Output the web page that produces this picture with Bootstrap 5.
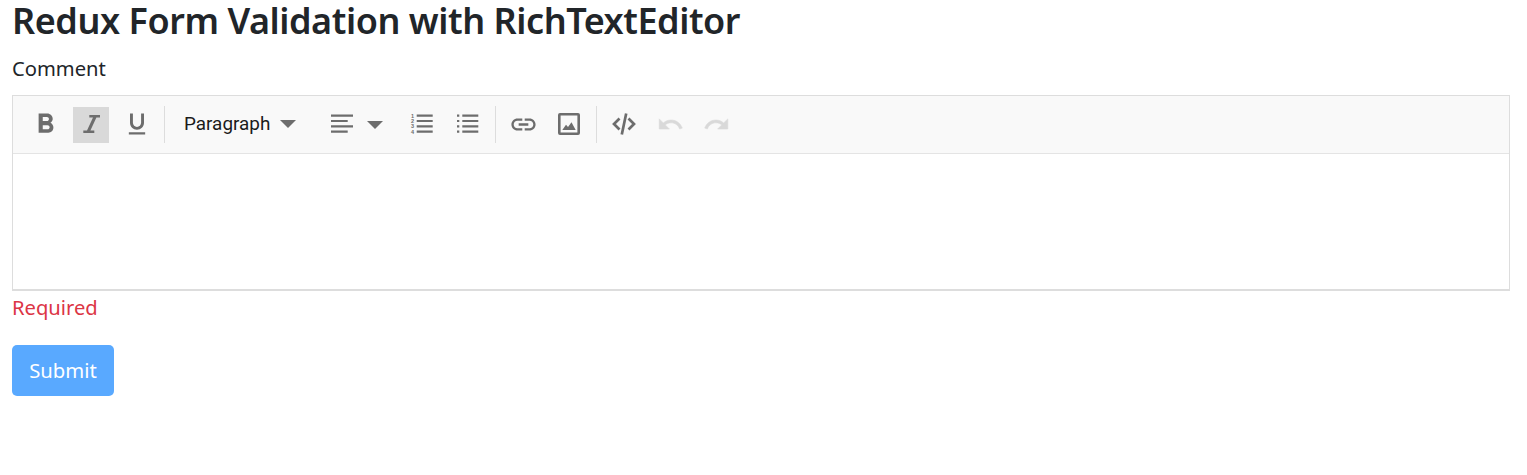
<!DOCTYPE html>
<html lang="en"><head><meta charset="utf-8"><title>Redux Form Validation</title>
<link href="https://cdn.jsdelivr.net/npm/bootstrap@5.3.0/dist/css/bootstrap.min.css" rel="stylesheet">
<style>
body{font-family:"Noto Sans","Open Sans",sans-serif;color:#212529;background:#fff;overflow:hidden}
.pagewrap{padding:0 17px 0 12px}
.ttl{font-size:36px;font-weight:600;line-height:42px;margin:0 0 13px;letter-spacing:-.45px}
.lbl{font-size:20.200px;line-height:27px;margin-bottom:13px;display:block}
.rte{border:1px solid #ddd;border-bottom-width:2px}
.rtebar{height:58px;background:#f9f9f9;border-bottom:1px solid #e4e4e4;padding:11px 0 0 14px}
.tb{width:36px;height:36px;border:0;background:none;padding:0 0 2px;margin-right:10px;display:flex;align-items:center;justify-content:center;color:#6d6d6d;flex:none}
.tb svg{width:24px;height:24px;fill:currentColor;display:block;flex:none}
.tb.on{background:#d9d9d9}
.tb.off{color:#d9d9d9}
.tb.off path{stroke:currentColor;stroke-width:.5}
.tb.ic33 svg{width:33px;height:33px}
.tb.ic28 svg{width:28px;height:28px}
.tb.ic29 svg{width:29px;height:29px}
.tb.ic27 svg{width:27px;height:27px}
.tb.endgrp{margin-right:9px}
.tb.startgrp{margin-left:9px}
.tb.listone{margin-left:21px}
.tb.alignbtn{margin-right:0}
.codeline{fill:none;stroke:currentColor;stroke-width:2.700}
.sep{width:1px;height:37px;background:#ddd;flex:none;margin-top:-1px}
.para{font-family:Roboto,sans-serif;font-size:18.900px;color:#1b1b1b;width:140px;height:36px;padding-bottom:2px;margin-left:19px;flex:none}
.caret{width:0;height:0;border:8px solid transparent;border-top:8px solid #6d6d6d;border-bottom:0;display:inline-block;margin-left:10px;flex:none}
.caret.aligncaret{margin:14px 0 0 7px}
.numtxt{font-size:5.500px;font-weight:700;font-family:"Liberation Sans",sans-serif}
.rtebody{height:135px;background:#fff}
.err{font-size:20.200px;color:#dc3545;line-height:27px;margin:3px 0 24px}
.sendbtn{background:#59a9ff;border:0;color:#fff;font-size:20.300px;height:51px;width:102px;border-radius:5px;padding:0;opacity:1}
</style></head><body>
<div class="pagewrap">
<h1 class="ttl">Redux Form Validation with RichTextEditor</h1>
<form>
<label class="lbl">Comment</label>
<div class="rte">
<div class="rtebar d-flex align-items-start">
<button type="button" class="tb ic33"><svg viewBox="0 0 24 24"><path d="M15.600 10.790c.97-.67 1.650-1.770 1.650-2.790 0-2.260-1.750-4-4-4H7v14h7.040c2.090 0 3.710-1.700 3.710-3.790 0-1.520-.86-2.820-2.150-3.420zM10 6.500h3c.83 0 1.500.67 1.500 1.500s-.67 1.500-1.500 1.500h-3v-3zm3.500 9H10v-3h3.500c.83 0 1.500.67 1.500 1.500s-.67 1.500-1.500 1.500z"/></svg></button>
<button type="button" class="tb on"><svg viewBox="0 0 24 24"><path d="M10.300 3H21v2.600h-3.600l-6 12.800H15.300V21H4.300v-2.600h3.700l6-12.800h-3.700z"/></svg></button>
<button type="button" class="tb endgrp ic28"><svg viewBox="0 0 24 24"><path d="M12 17c3.310 0 6-2.690 6-6V3h-2.500v8c0 1.930-1.570 3.500-3.500 3.500S8.500 12.930 8.500 11V3H6v8c0 3.310 2.690 6 6 6zm-7 2v2h14v-2H5z"/></svg></button>
<span class="sep"></span>
<div class="para d-flex align-items-center">Paragraph<span class="caret"></span></div>
<button type="button" class="tb alignbtn"><svg viewBox="0 0 24 24"><path d="M1 2.600h22v2.200H1zM1 7.900h16.700v2.200H1zM1 13.200h22v2.200H1zM1 18.600h16.700v2.200H1z"/></svg></button>
<span class="caret aligncaret"></span>
<button type="button" class="tb listone"><svg viewBox="0 0 24 24"><path d="M6.700 2.600h16v2.200h-16zM6.700 7.900h16v2.200h-16zM6.700 13.200h16v2.200h-16zM6.700 18.600h16v2.200h-16z"/><text class="numtxt" x="1" y="5.600">1</text><text class="numtxt" x="1" y="10.900">2</text><text class="numtxt" x="1" y="16.200">3</text><text class="numtxt" x="1" y="21.600">4</text></svg></button>
<button type="button" class="tb endgrp"><svg viewBox="0 0 24 24"><path d="M6.300 2.600h16v2.200h-16zM6.300 7.900h16v2.200h-16zM6.300 13.200h16v2.200h-16zM6.300 18.600h16v2.200h-16zM1 2.600h2.300v2.200H1zM1 7.900h2.300v2.200H1zM1 13.200h2.300v2.200H1zM1 18.600h2.300v2.200H1z"/></svg></button>
<span class="sep"></span>
<button type="button" class="tb startgrp ic29"><svg viewBox="0 0 24 24"><path d="M3.900 12c0-1.710 1.390-3.100 3.100-3.100h4V7H7c-2.760 0-5 2.240-5 5s2.240 5 5 5h4v-1.900H7c-1.710 0-3.100-1.390-3.100-3.100zM8 13h8v-2H8v2zm9-6h-4v1.900h4c1.710 0 3.100 1.390 3.100 3.100s-1.390 3.100-3.100 3.100h-4V17h4c2.760 0 5-2.240 5-5s-2.240-5-5-5z"/></svg></button>
<button type="button" class="tb endgrp"><svg viewBox="0 0 24 24"><path fill-rule="evenodd" d="M3 1h18a2 2 0 0 1 2 2v18a2 2 0 0 1-2 2H3a2 2 0 0 1-2-2V3a2 2 0 0 1 2-2zm.6 2.600v16.800h16.800V3.600zM5.300 18l3.700-5.200 2 2.200 3.500-4.700 4.200 7.700z"/></svg></button>
<span class="sep"></span>
<button type="button" class="tb startgrp"><svg viewBox="0 0 24 24"><path class="codeline" d="M7.500 6.500 2 12l5.500 5.500M16.500 6.500 22 12l-5.500 5.500M14.200 1.500 9.800 22.500"/></svg></button>
<button type="button" class="tb off ic27"><svg viewBox="0 0 24 24"><path d="M12.500 8c-2.650 0-5.050.99-6.900 2.600L2 7v9h9l-3.620-3.620c1.390-1.160 3.160-1.880 5.120-1.880 3.540 0 6.550 2.310 7.600 5.500l2.370-.78C21.080 11.030 17.150 8 12.500 8z"/></svg></button>
<button type="button" class="tb off ic27"><svg viewBox="0 0 24 24"><path d="M18.400 10.600C16.550 8.990 14.150 8 11.500 8c-4.650 0-8.580 3.030-9.960 7.220L3.900 16c1.050-3.190 4.050-5.500 7.600-5.500 1.950 0 3.730.72 5.120 1.880L13 16h9V7l-3.600 3.600z"/></svg></button>
</div>
<div class="rtebody"></div>
</div>
<div class="err">Required</div>
<button type="button" class="btn sendbtn">Submit</button>
</form>
</div>
<script src="https://cdn.jsdelivr.net/npm/bootstrap@5.3.0/dist/js/bootstrap.bundle.min.js"></script>
</body></html>
